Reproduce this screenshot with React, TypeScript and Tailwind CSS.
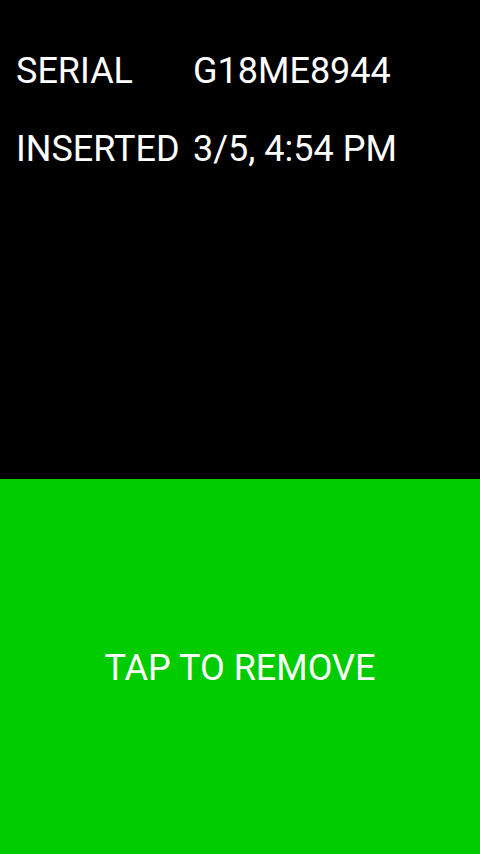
export default function App() {
  const rows = [
    { label: 'SERIAL', value: 'G18ME8944' },
    { label: 'INSERTED', value: '3/5, 4:54 PM' },
  ];

  return (
    <div className="w-[480px] h-[854px] flex flex-col bg-black text-white font-['Roboto',sans-serif]">
      <div className="h-[479px] px-4 pt-[50px] flex flex-col gap-[36px]">
        {rows.map((row) => (
          <div key={row.label} className="flex text-[36px] leading-[42px]">
            <span className="w-[177px] shrink-0">{row.label}</span>
            <span>{row.value}</span>
          </div>
        ))}
      </div>
      <button className="flex-1 bg-[#00cc00] flex items-center justify-center text-[36px] leading-[42px] text-white pt-[3px]">
        TAP TO REMOVE
      </button>
    </div>
  );
}
